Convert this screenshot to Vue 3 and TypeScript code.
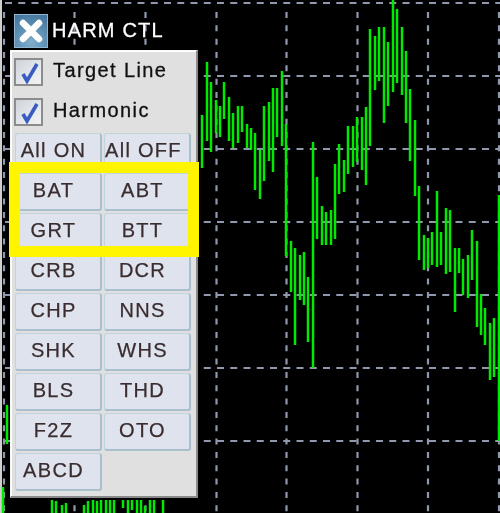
<template>
  <div class="screen">
    <svg class="chart" width="500" height="513" viewBox="0 0 500 513">
      <line v-for="y in gridRows" :key="'h' + y" class="grid-h" x1="5" x2="500" :y1="y" :y2="y" />
      <line v-for="x in gridCols" :key="'v' + x" class="grid-v" :x1="x" :x2="x" y1="12" y2="513" />
      <line v-for="(b, i) in bars" :key="i" class="bar" :x1="b[0]" :x2="b[0]" :y1="b[1]" :y2="b[2]" />
    </svg>

    <div class="title-bar">
      <button class="close-btn">
        <svg width="26" height="26" viewBox="0 0 26 26">
          <path d="M5 5 L21 21 M21 5 L5 21" stroke="#fff" stroke-width="6.5" stroke-linecap="round" fill="none" />
        </svg>
      </button>
      <span class="title">HARM CTL</span>
    </div>

    <div class="panel">
      <label v-for="c in checks" :key="c" class="check-row">
        <span class="checkbox">
          <svg width="24" height="24" viewBox="0 0 24 24">
            <path d="M6 14 L10 21 L20 4" stroke="#3a5bc2" stroke-width="3.6" fill="none" />
          </svg>
        </span>
        <span class="check-label">{{ c }}</span>
      </label>
      <div class="buttons">
        <button v-for="b in buttons" :key="b" class="pat-btn">{{ b }}</button>
      </div>
    </div>

    <div class="highlight"></div>
  </div>
</template>

<script setup lang="ts">
const checks = ['Target Line', 'Harmonic']
const buttons = [
  'All ON', 'All OFF', 'BAT', 'ABT', 'GRT', 'BTT', 'CRB', 'DCR', 'CHP', 'NNS',
  'SHK', 'WHS', 'BLS', 'THD', 'F2Z', 'OTO', 'ABCD',
]

const gridRows = [3, 76, 149, 222, 295, 368, 441]
const gridCols = [4, 74.5, 145.5, 216.5, 286.5, 357.5, 428, 499]

// x, top, bottom
const bars: number[][] = [
  [3, 487, 513], [7, 405, 444],
  [52, 500, 513], [56, 501, 513], [62, 505, 513], [66, 503, 513],
  [84, 505, 513], [88, 501, 513], [93, 500, 513], [97, 501, 513], [101, 500, 513], [106, 500, 513], [110, 500, 513], [114, 500, 513],
  [123, 500, 508], [128, 500, 513], [132, 500, 510], [137, 500, 513], [141, 500, 513], [145, 506, 513], [150, 500, 513], [154, 500, 513], [163, 500, 513],
  [202, 115, 168], [207, 62, 141], [211, 82, 152], [216, 100, 133], [220, 106, 137],
  [224, 82, 119], [229, 97, 141], [233, 113, 148], [238, 106, 143], [242, 106, 132],
  [247, 124, 148], [251, 128, 150], [255, 133, 190], [260, 150, 199], [264, 106, 181],
  [269, 102, 161], [273, 88, 172], [277, 88, 137], [282, 71, 146], [286, 124, 256],
  [291, 241, 292], [295, 248, 345], [300, 255, 300], [304, 252, 305], [308, 277, 342],
  [313, 142, 368], [317, 177, 239], [322, 206, 245], [326, 212, 245], [331, 210, 245],
  [335, 164, 239], [339, 144, 194], [344, 160, 192], [348, 126, 174], [353, 126, 167],
  [357, 117, 162], [362, 117, 170], [366, 107, 185], [370, 29, 146], [375, 36, 90],
  [379, 27, 81], [384, 27, 123], [388, 42, 106], [393, 0, 92], [397, 9, 83],
  [402, 27, 95], [406, 51, 123], [410, 89, 161], [415, 120, 196], [419, 186, 260],
  [424, 235, 270], [428, 238, 268], [432, 232, 265], [437, 191, 267], [441, 232, 265],
  [446, 208, 274], [450, 210, 272], [455, 248, 312], [459, 248, 273], [463, 259, 295],
  [468, 255, 298], [472, 230, 280], [477, 241, 327], [481, 294, 335], [485, 308, 345],
  [490, 323, 380], [494, 318, 377], [499, 195, 441],
]
</script>

<style>
html,
body {
  background: #000;
}
</style>

<style scoped>
.screen {
  position: relative;
  width: 500px;
  height: 513px;
  overflow: hidden;
  background: #000;
  font-family: "Liberation Sans", Arial, sans-serif;
  filter: blur(0.55px);
}

.screen::before {
  content: "";
  position: absolute;
  left: 0;
  top: 0;
  bottom: 0;
  width: 2px;
  background: #cfcfcf;
}

.chart {
  position: absolute;
  left: 0;
  top: 0;
}

.grid-h {
  stroke: #8f98ac;
  stroke-width: 2.2;
  stroke-dasharray: 7 6.25;
}

.grid-v {
  stroke: #8f98ac;
  stroke-width: 2.2;
  stroke-dasharray: 6 7.33;
}

.bar {
  stroke: #00ea00;
  stroke-width: 2.5;
}

.title-bar {
  position: absolute;
  left: 14px;
  top: 14px;
  display: flex;
  align-items: center;
  gap: 4px;
}

.close-btn {
  width: 34px;
  height: 34px;
  padding: 0;
  border: 1px solid #8fb6d2;
  background: radial-gradient(circle at 50% 85%, #82aecb 0%, #5a8cb0 55%, #41719a 100%);
  display: flex;
  align-items: center;
  justify-content: center;
}

.title {
  color: #fff;
  font-size: 20px;
  letter-spacing: 1.2px;
  -webkit-text-stroke: 0.3px #fff;
  padding-bottom: 2px;
}

.panel {
  position: absolute;
  left: 10px;
  top: 50px;
  box-sizing: border-box;
  width: 188px;
  height: 448px;
  padding: 7px 6px 0 3px;
  background: #e0e0e0;
  border: 1px solid #f6f6f6;
  border-right: 2px solid #8a8a8a;
  border-bottom: 2px solid #8a8a8a;
  box-shadow: inset 1px 1px 0 #fff;
}

.check-row {
  display: flex;
  align-items: center;
  height: 28px;
  margin-bottom: 12px;
}

.checkbox {
  box-sizing: border-box;
  width: 29px;
  height: 28px;
  border: 2px solid #8c8c8c;
  background: linear-gradient(135deg, #cfd3d9 0%, #e6e8ec 60%, #f2f2f2 100%);
  display: flex;
  align-items: center;
  justify-content: center;
}

.check-label {
  margin-left: 10px;
  padding-bottom: 4px;
  color: #111;
  font-size: 20px;
  letter-spacing: 1.4px;
  -webkit-text-stroke: 0.3px #111;
}

.buttons {
  display: grid;
  grid-template-columns: 87px 87px;
  grid-auto-rows: 38px;
  gap: 2px;
  margin-left: 1px;
  margin-top: -5px;
}

.pat-btn {
  padding: 0 9px 3px 0;
  border: 1px solid #c4d2dc;
  border-right: 2px solid #a9bfcc;
  border-bottom: 2px solid #a9bfcc;
  border-radius: 3px;
  background: #dfe3ed;
  color: #3a2d30;
  font-family: inherit;
  font-size: 20px;
  letter-spacing: 1.3px;
  -webkit-text-stroke: 0.25px #3a2d30;
  white-space: nowrap;
}

.highlight {
  position: absolute;
  left: 9px;
  top: 162px;
  width: 190px;
  height: 95px;
  box-sizing: border-box;
  border: 11px solid #fff500;
}
</style>
